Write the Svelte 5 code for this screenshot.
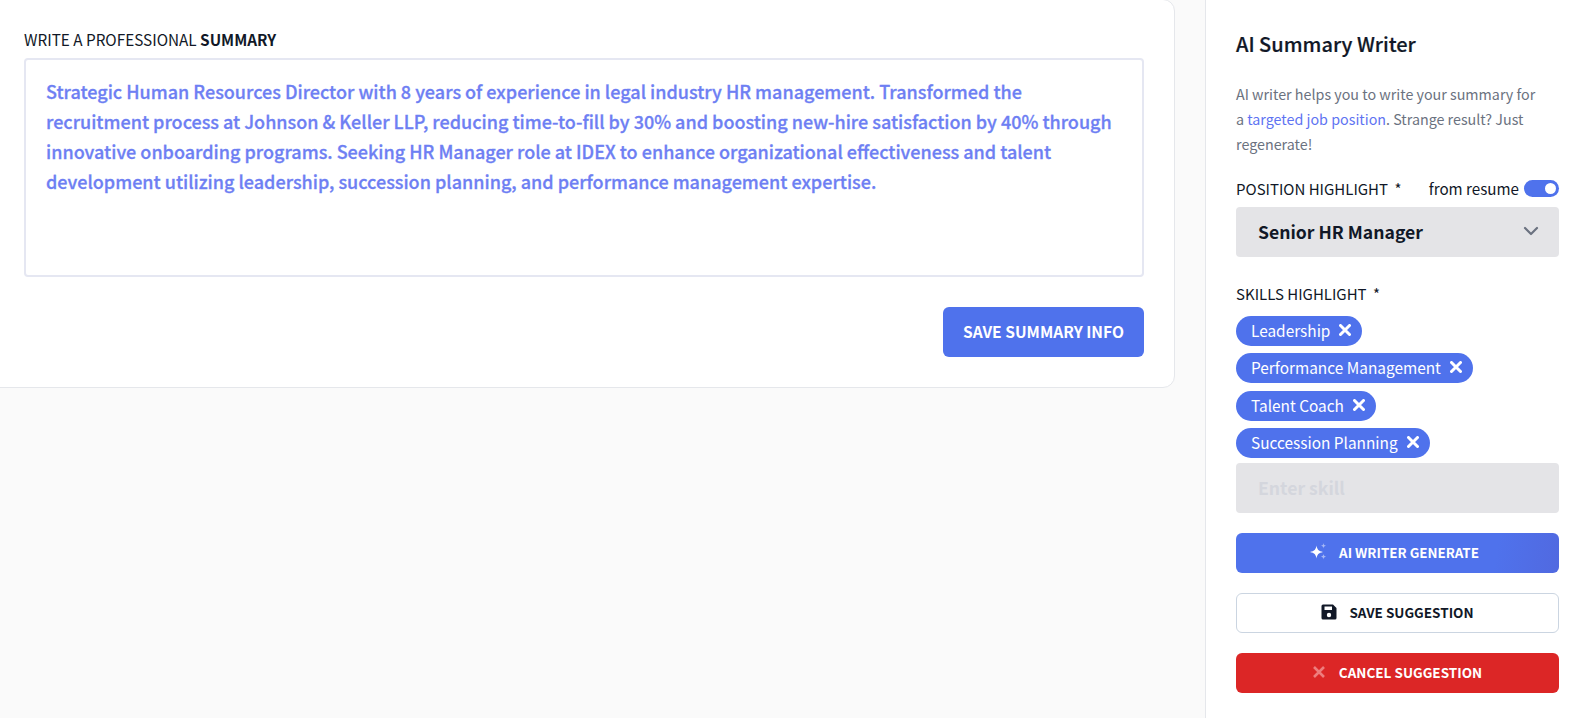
<script>
  const summary =
    "Strategic Human Resources Director with 8 years of experience in legal industry HR management. Transformed the recruitment process at Johnson & Keller LLP, reducing time-to-fill by 30% and boosting new-hire satisfaction by 40% through innovative onboarding programs. Seeking HR Manager role at IDEX to enhance organizational effectiveness and talent development utilizing leadership, succession planning, and performance management expertise.";

  const skills = [
    "Leadership",
    "Performance Management",
    "Talent Coach",
    "Succession Planning",
  ];
</script>

<div class="page">
  <main class="left">
    <section class="card">
      <div class="card-label">WRITE A PROFESSIONAL <b>SUMMARY</b></div>
      <div class="textarea">{summary}</div>
      <div class="card-actions">
        <button class="btn-save-info">SAVE SUMMARY INFO</button>
      </div>
    </section>
  </main>

  <aside class="side">
    <h2>AI Summary Writer</h2>
    <p class="intro">
      AI writer helps you to write your summary for a <span class="link">targeted job position</span>. Strange result? Just regenerate!
    </p>

    <div class="field-head">
      <span class="label">POSITION HIGHLIGHT <i>*</i></span>
      <span class="from">from resume <span class="toggle"><span class="knob"></span></span></span>
    </div>
    <div class="select">
      <span>Senior HR Manager</span>
      <svg width="16" height="10" viewBox="0 0 16 10" fill="none" stroke="#6b7280" stroke-width="2.2" stroke-linecap="round" stroke-linejoin="round"><path d="M2 2l6 6 6-6" /></svg>
    </div>

    <div class="label skills-label">SKILLS HIGHLIGHT <i>*</i></div>
    <div class="chips">
      {#each skills as skill}
        <span class="chip">
          {skill}
          <svg width="12" height="12" viewBox="0 0 12 12" stroke="#fff" stroke-width="3" stroke-linecap="round"><path d="M1.5 1.5l9 9M10.5 1.5l-9 9" /></svg>
        </span>
      {/each}
    </div>
    <div class="skill-input">Enter skill</div>

    <button class="action generate">
      <svg width="17" height="17" viewBox="0 0 17 17" fill="#fff">
        <path d="M6.5 2.5C7.2 6.6 8.4 8 13 9 8.4 10 7.2 11.4 6.5 15.5 5.8 11.4 4.6 10 0 9 4.6 8 5.8 6.6 6.5 2.5z" />
        <path opacity=".5" d="M13.5 0c.3 1.9.8 2.4 2.8 2.8-2 .4-2.5.9-2.8 2.8-.3-1.9-.8-2.4-2.8-2.8 2-.4 2.5-.9 2.8-2.8zM13.5 11c.3 1.8.8 2.3 2.6 2.7-1.8.4-2.3.9-2.6 2.7-.3-1.8-.8-2.3-2.6-2.7 1.8-.4 2.3-.9 2.6-2.7z" />
      </svg>
      AI WRITER GENERATE
    </button>
    <button class="action save">
      <svg width="16" height="16" viewBox="0 0 16 16"><path fill="#111827" fill-rule="evenodd" d="M2 0.5h10l3.5 3.5v10a1.5 1.5 0 0 1-1.5 1.5H2A1.5 1.5 0 0 1 .5 14V2A1.5 1.5 0 0 1 2 .5zM3.5 2.5v3.5h7.5V2.5zM8 8.8a2.2 2.2 0 1 0 0 4.4 2.2 2.2 0 0 0 0-4.4z" /></svg>
      SAVE SUGGESTION
    </button>
    <button class="action cancel">
      <svg width="12" height="12" viewBox="0 0 12 12" stroke="#ee7d7d" stroke-width="2.6"><path d="M1 1l10 10M11 1L1 11" /></svg>
      CANCEL SUGGESTION
    </button>
  </aside>
</div>

<style>
  :global(body) {
    background: #fafafa;
  }

  .page {
    display: flex;
    height: 718px;
    overflow: hidden;
    background: #fafafa;
    color: #111827;
    font-family: "Noto Sans CJK SC", "Noto Sans", sans-serif;
  }

  .left {
    width: 1175px;
    flex: none;
  }

  .card {
    box-sizing: border-box;
    height: 389px;
    margin: -1px 0 0 -13px;
    padding: 29px 30px 30px 36px;
    background: #fff;
    border: 1px solid #e5e7eb;
    border-radius: 12px;
  }

  .card-label {
    font-size: 15.3px;
    line-height: 20px;
    height: 29px;
  }

  .card-label b {
    font-weight: 700;
  }

  .textarea {
    box-sizing: border-box;
    height: 219px;
    padding: 16px 20px;
    border: 2px solid #e5e7f2;
    border-radius: 4px;
    color: #6e7ff3;
    font-size: 18px;
    font-weight: 500;
    line-height: 30px;
    -webkit-text-stroke: 0.3px #6e7ff3;
  }

  .card-actions {
    display: flex;
    justify-content: flex-end;
    margin-top: 30px;
  }

  button {
    font-family: inherit;
    border: 0;
    cursor: pointer;
    padding: 0 0 2px;
  }

  .btn-save-info {
    width: 201px;
    height: 50px;
    background: #4f72ec;
    color: #fff;
    border-radius: 6px;
    font-size: 15.6px;
    font-weight: 700;
  }

  .side {
    box-sizing: border-box;
    flex: none;
    width: 379px;
    margin-left: 30px;
    padding: 27px 25px 0 30px;
    background: #fff;
    border-left: 1px solid #e5e7eb;
  }

  h2 {
    margin: 0;
    font-size: 20px;
    font-weight: 500;
    line-height: 34px;
    -webkit-text-stroke: 0.2px #111827;
  }

  .intro {
    margin: 20px 0 0;
    padding-right: 14px;
    font-size: 14.3px;
    line-height: 25px;
    color: #6b7280;
  }

  .link {
    color: #5e73f2;
  }

  .field-head {
    display: flex;
    justify-content: space-between;
    align-items: center;
    margin-top: 17px;
    height: 30px;
    font-size: 15px;
  }

  .label i {
    font-style: normal;
    margin-left: 3px;
  }

  .from {
    display: flex;
    align-items: center;
    gap: 5px;
    font-size: 15.2px;
  }

  .toggle {
    display: flex;
    align-items: center;
    justify-content: flex-end;
    width: 35px;
    height: 17px;
    padding-right: 3px;
    box-sizing: border-box;
    background: #4f72ec;
    border-radius: 9px;
  }

  .knob {
    width: 11px;
    height: 11px;
    background: #fff;
    border-radius: 50%;
  }

  .select {
    display: flex;
    align-items: center;
    justify-content: space-between;
    box-sizing: border-box;
    height: 50px;
    margin-top: 4px;
    padding: 0 20px 2px 22px;
    background: #e4e4e7;
    border-radius: 4px;
    font-size: 17.6px;
    font-weight: 700;
  }

  .skills-label {
    margin-top: 26px;
    font-size: 15px;
    line-height: 22px;
  }

  .chips {
    display: flex;
    flex-direction: column;
    align-items: flex-start;
    gap: 7.3px;
    margin-top: 11px;
  }

  .chip {
    display: flex;
    align-items: center;
    gap: 9px;
    box-sizing: border-box;
    height: 30px;
    padding: 0 11px 2px 15px;
    background: #4f72ec;
    color: #fff;
    border-radius: 15px;
    font-size: 15.4px;
  }

  .skill-input {
    box-sizing: border-box;
    display: flex;
    align-items: center;
    height: 50px;
    margin-top: 5px;
    padding-left: 22px;
    background: #e4e4e7;
    border-radius: 4px;
    color: #d4d6dd;
    font-size: 17.6px;
    font-weight: 700;
  }

  .action {
    box-sizing: border-box;
    display: flex;
    align-items: center;
    justify-content: center;
    gap: 12px;
    width: 100%;
    height: 40px;
    margin-top: 20px;
    border-radius: 6px;
    font-size: 13.5px;
    font-weight: 700;
  }

  .generate {
    background: linear-gradient(100deg, #4f72ec 80%, #5169e0);
    color: #fff;
    padding-right: 6px;
    font-size: 13.4px;
  }

  .save {
    background: #fff;
    border: 1px solid #cbd5e1;
    color: #111827;
  }

  .cancel {
    gap: 14px;
    background: #dc2626;
    color: #fff;
  }
</style>
